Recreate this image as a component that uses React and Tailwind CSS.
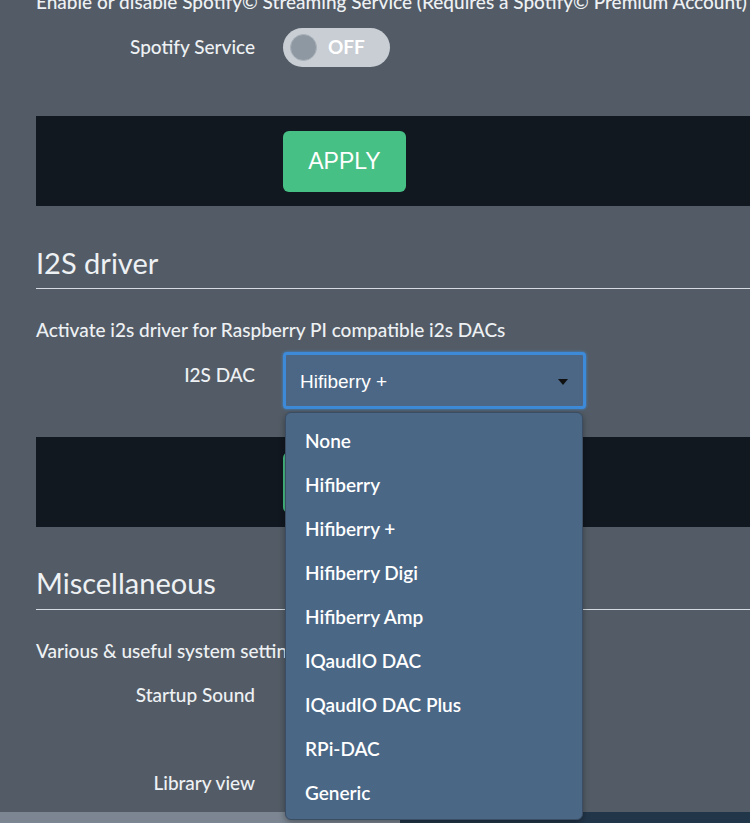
import React from "react";

const options = [
  "None",
  "Hifiberry",
  "Hifiberry +",
  "Hifiberry Digi",
  "Hifiberry Amp",
  "IQaudIO DAC",
  "IQaudIO DAC Plus",
  "RPi-DAC",
  "Generic",
];

function Label({ children, className = "" }) {
  return (
    <div className={"w-[219px] shrink-0 text-right text-[19px] font-medium text-[#eef1f4] " + className}>
      {children}
    </div>
  );
}

function Band() {
  return (
    <div className="ml-[36px] h-[90px] bg-[#121820] pt-[15px] pl-[247px]">
      <button className="h-[61px] w-[123px] rounded-[6px] bg-[#47c085] text-[23px] text-white font-['Liberation_Sans',sans-serif]">
        APPLY
      </button>
    </div>
  );
}

export default function App() {
  return (
    <div className="relative h-[823px] w-[750px] overflow-hidden bg-[#535c66] font-['Lato',sans-serif] text-[#eef1f4]">
      <div className="-mt-[10px]">
        <p className="pl-[36px] text-[19px] font-medium leading-[24px] whitespace-nowrap">
          Enable or disable Spotify© Streaming Service (Requires a Spotify© Premium Account)
        </p>

        <div className="mt-[14px] flex h-[39px] items-center">
          <Label className="ml-[36px]">Spotify Service</Label>
          <div className="ml-[28px] flex h-[39px] w-[107px] items-center rounded-full bg-[#c9ced4] pl-[7px]">
            <div className="h-[27px] w-[27px] rounded-full bg-[#8e98a3] border border-[#a9b1b9]" />
            <span className="ml-[11px] text-[19px] font-bold text-white">OFF</span>
          </div>
        </div>

        <div className="mt-[49px]">
          <Band />
        </div>

        <h2 className="ml-[36px] mt-[41px] border-b border-[#d5dbe0] pb-[9px] text-[29px] leading-[32px]">
          I2S driver
        </h2>

        <p className="ml-[36px] mt-[29px] text-[19px] font-medium leading-[24px] whitespace-nowrap">
          Activate i2s driver for Raspberry PI compatible i2s DACs
        </p>

        <div className="mt-[10px] flex">
          <Label className="ml-[36px] pt-[11px] leading-[24px]">I2S DAC</Label>
          <div className="relative ml-[28px]">
            <div className="flex h-[57px] w-[303px] items-center rounded-[4px] border-[3px] border-[#3d8ad8] bg-[#4b6785] pl-[14px] pr-[15px] pt-[3px] shadow-[0_0_3px_#3d8ad8]">
              <span className="flex-1 text-[19px] text-white font-['Liberation_Sans',sans-serif]">Hifiberry +</span>
              <svg width="10" height="6" viewBox="0 0 10 6">
                <path d="M0 0 L10 0 L5 6 Z" fill="#111" />
              </svg>
            </div>
            <div className="absolute left-[2px] top-[60px] z-20 h-[408px] w-[298px] rounded-[6px] border border-[#3a4d63] bg-[#4a6786] pt-[6px] shadow-[0_2px_6px_rgba(0,0,0,0.35)]">
              {options.map((o) => (
                <div key={o} className="flex h-[44px] items-center pl-[19px] text-[19px] font-semibold text-white">
                  {o}
                </div>
              ))}
            </div>
          </div>
        </div>

        <div className="mt-[28px]">
          <Band />
        </div>

        <h2 className="ml-[36px] mt-[40px] border-b border-[#d5dbe0] pb-[10px] text-[29px] leading-[32px]">
          Miscellaneous
        </h2>

        <p className="ml-[36px] mt-[29px] text-[19px] font-medium leading-[24px] whitespace-nowrap">
          Various &amp; useful system settings
        </p>

        <div className="mt-[13px] flex h-[39px] items-center">
          <Label className="ml-[36px]">Startup Sound</Label>
        </div>

        <div className="mt-[49px] flex h-[39px] items-center">
          <Label className="ml-[36px]">Library view</Label>
        </div>
      </div>

      <div className="absolute bottom-0 left-0 z-10 flex h-[11px] w-full">
        <div className="w-[400px] bg-[#7b8692]" />
        <div className="flex-1 bg-[#22364a]" />
      </div>
    </div>
  );
}
